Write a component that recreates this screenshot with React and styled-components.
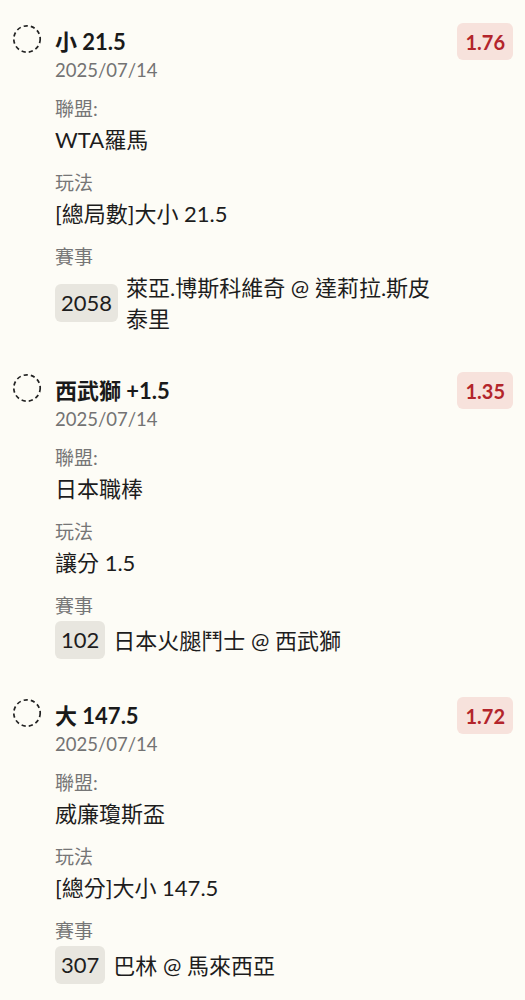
import styled, { createGlobalStyle } from 'styled-components'

const GlobalStyle = createGlobalStyle`
    body {
        margin: 0;
        background: #fdfcf6;
        font-family: Lato, "Noto Sans CJK TC", sans-serif;
        color: #1d1d1d;
    }
`

const bets = [
    {
        title: '小 21.5',
        date: '2025/07/14',
        odds: '1.76',
        league: 'WTA羅馬',
        play: '[總局數]大小 21.5',
        code: '2058',
        match: '萊亞.博斯科維奇 @ 達莉拉.斯皮泰里',
    },
    {
        title: '西武獅 +1.5',
        date: '2025/07/14',
        odds: '1.35',
        league: '日本職棒',
        play: '讓分 1.5',
        code: '102',
        match: '日本火腿鬥士 @ 西武獅',
    },
    {
        title: '大 147.5',
        date: '2025/07/14',
        odds: '1.72',
        league: '威廉瓊斯盃',
        play: '[總分]大小 147.5',
        code: '307',
        match: '巴林 @ 馬來西亞',
    },
]

function DashedCircle () {
    return (
        <svg width="30" height="30" viewBox="0 0 30 30">
            <circle cx="15" cy="15" r="13.2" fill="none" stroke="#222" strokeWidth="1.7" strokeDasharray="4.2 3.1" />
        </svg>
    )
}

function BetCard ({ bet }) {
    return (
        <Card>
            <Marker>
                <DashedCircle />
            </Marker>
            <Body>
                <Title>{bet.title}</Title>
                <DateText>{bet.date}</DateText>
                <Fields>
                    <Field>
                        <Label>聯盟:</Label>
                        <Value>{bet.league}</Value>
                    </Field>
                    <Field>
                        <Label>玩法</Label>
                        <Value>{bet.play}</Value>
                    </Field>
                    <Field>
                        <Label>賽事</Label>
                        <MatchRow>
                            <Code>{bet.code}</Code>
                            <Value>{bet.match}</Value>
                        </MatchRow>
                    </Field>
                </Fields>
            </Body>
            <Odds>{bet.odds}</Odds>
        </Card>
    )
}

function App () {
    return (
        <Page>
            <GlobalStyle />
            {bets.map(bet => <BetCard key={bet.code} bet={bet} />)}
        </Page>
    )
}

const Page = styled.div`
    display: flex;
    flex-direction: column;
    gap: 43px;
    padding: 28px 12px 40px 12px;
`

const Card = styled.div`
    display: flex;
    align-items: flex-start;
    gap: 13px;
`

const Marker = styled.div`
    width: 30px;
    height: 30px;
    margin-top: -4px;
    flex-shrink: 0;
`

const Body = styled.div`
    flex: 1;
    display: flex;
    flex-direction: column;
    min-width: 0;
`

const Title = styled.div`
    font-size: 22px;
    font-weight: 700;
    line-height: 28px;
    color: #1a1a1a;
`

const DateText = styled.div`
    font-size: 18.5px;
    line-height: 28px;
    color: #737373;
`

const Fields = styled.div`
    display: flex;
    flex-direction: column;
    gap: 15px;
    margin-top: 12px;
`

const Field = styled.div`
    display: flex;
    flex-direction: column;
    gap: 2px;
`

const Label = styled.div`
    font-size: 19px;
    line-height: 26px;
    color: #767676;
`

const Value = styled.div`
    font-size: 22px;
    line-height: 31px;
    color: #1d1d1d;
`

const MatchRow = styled.div`
    display: flex;
    align-items: center;
    gap: 8px;
`

const Code = styled.div`
    flex-shrink: 0;
    font-size: 22px;
    line-height: 38px;
    padding: 0 6px;
    border-radius: 6px;
    background: #e8e6df;
    color: #1d1d1d;
`

const Odds = styled.div`
    flex-shrink: 0;
    margin-top: -5px;
    margin-left: 2px;
    padding: 0 8px;
    height: 37px;
    display: flex;
    align-items: center;
    font-size: 20px;
    font-weight: 700;
    color: #b3252b;
    background: #f7e2dc;
    border-radius: 6px;
`

export default App
